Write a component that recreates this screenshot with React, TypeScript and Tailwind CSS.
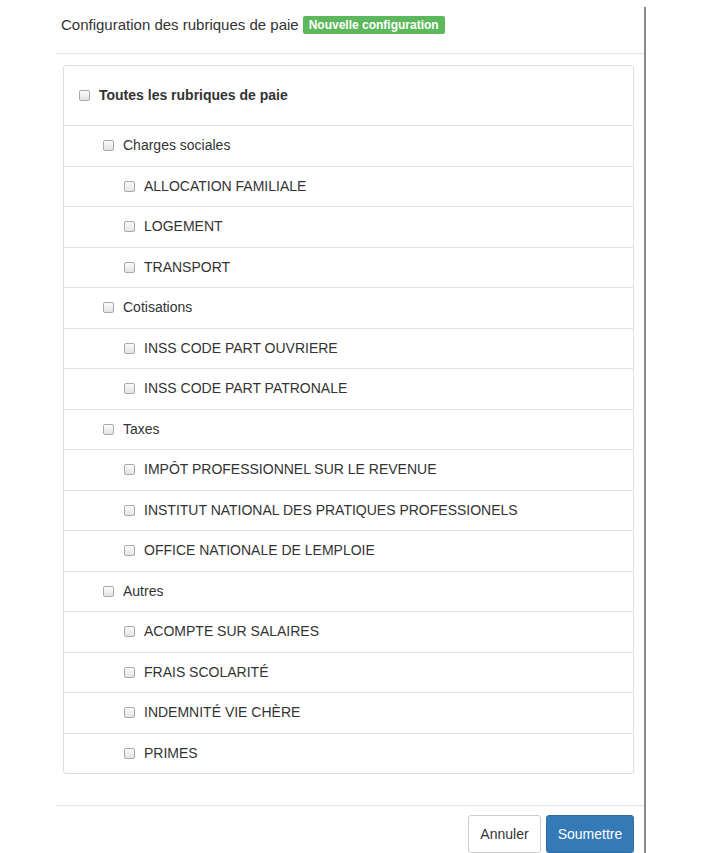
const groups = [
  {
    name: "Charges sociales",
    items: ["ALLOCATION FAMILIALE", "LOGEMENT", "TRANSPORT"],
  },
  {
    name: "Cotisations",
    items: ["INSS CODE PART OUVRIERE", "INSS CODE PART PATRONALE"],
  },
  {
    name: "Taxes",
    items: [
      "IMPÔT PROFESSIONNEL SUR LE REVENUE",
      "INSTITUT NATIONAL DES PRATIQUES PROFESSIONELS",
      "OFFICE NATIONALE DE LEMPLOIE",
    ],
  },
  {
    name: "Autres",
    items: ["ACOMPTE SUR SALAIRES", "FRAIS SCOLARITÉ", "INDEMNITÉ VIE CHÈRE", "PRIMES"],
  },
];

const Box = () => (
  <span className="inline-block w-[11px] h-[11px] rounded-[2px] border border-[#a9a9a9] bg-gradient-to-b from-[#fbfbfb] to-[#e4e4e4] shrink-0" />
);

const Row = ({ label, level }: { label: string; level: number }) => (
  <div
    className={`flex items-center h-[40.5px] border-t border-[#e3e3e3] ${
      level === 1 ? "pl-[39px]" : "pl-[60px]"
    }`}
  >
    <Box />
    <span className="ml-[9px]">{label}</span>
  </div>
);

export default function App() {
  return (
    <div className="w-[709px] h-[853px] overflow-hidden bg-white font-['Liberation_Sans',Arial,sans-serif] text-[14px] text-[#333]">
      <div className="ml-[56px] mt-[7px] w-[590px] h-[846px] border-r-2 border-[#8a8a8a] flex flex-col">
        {/* header */}
        <div className="h-[47px] border-b border-[#e5e5e5] flex items-center pl-[5px] pr-[7px] pb-[10px]">
          <span className="text-[15px]">Configuration des rubriques de paie</span>
          <span className="ml-[4px] bg-[#5cb85c] text-white font-bold text-[12px] leading-none px-[6px] py-[3px] rounded-[2px]">
            Nouvelle configuration
          </span>
        </div>

        {/* body */}
        <div className="pl-[7px] pr-[10px] pt-[11px] pb-[31px] border-b border-[#e5e5e5]">
          <div className="border border-[#dedede] rounded-[3px]">
            <div className="flex items-center h-[59px] pl-[15px] font-bold">
              <Box />
              <span className="ml-[9px]">Toutes les rubriques de paie</span>
            </div>
            {groups.map((g) => (
              <div key={g.name}>
                <Row label={g.name} level={1} />
                {g.items.map((it) => (
                  <Row key={it} label={it} level={2} />
                ))}
              </div>
            ))}
          </div>
        </div>

        {/* footer */}
        <div className="flex justify-end gap-[5px] pt-[9px] pr-[10px]">
          <button className="h-[38px] w-[73px] border border-[#cccccc] rounded-[3px] bg-white text-[#333] text-[14px]">
            Annuler
          </button>
          <button className="h-[38px] w-[88px] border border-[#2e6da4] rounded-[3px] bg-[#337ab7] text-white text-[14px]">
            Soumettre
          </button>
        </div>
      </div>
    </div>
  );
}
